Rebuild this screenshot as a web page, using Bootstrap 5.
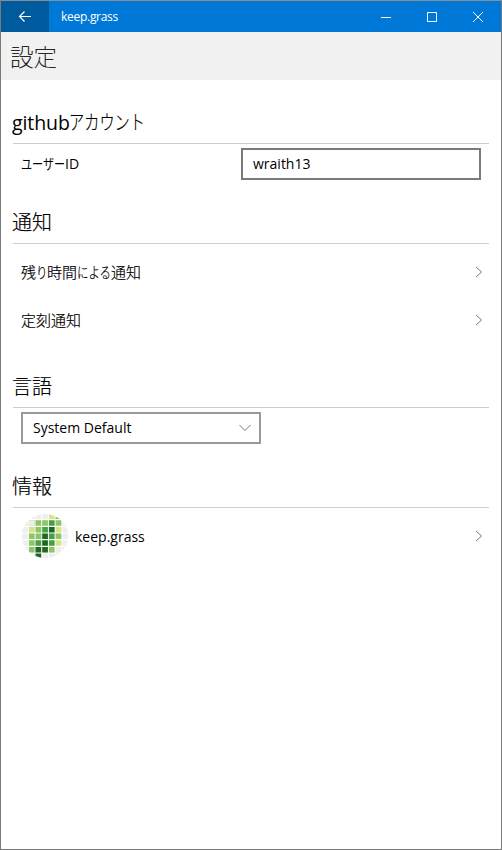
<!DOCTYPE html>
<html lang="ja">
<head>
<meta charset="utf-8">
<meta name="viewport" content="width=device-width, initial-scale=1">
<title>keep.grass</title>
<link href="https://cdn.jsdelivr.net/npm/bootstrap@5.3.0/dist/css/bootstrap.min.css" rel="stylesheet">
<style>
body{font-family:"Open Sans","Noto Sans CJK JP",sans-serif;font-size:14px;line-height:20px;color:#000}
svg{display:block}
.window{height:850px;border:1px solid #7a7a7a;border-top-color:#8a8f94}
.titlebar{height:31px;background:#0078d7}
.back-btn{width:48px;background:#005a9e}
.app-title{font-size:12px;letter-spacing:-.28px;line-height:16px}
.caption-btn{width:46px}
.page-head{height:48px;background:#f1f1f1;font-family:"Noto Sans CJK JP",sans-serif;font-size:23.5px;line-height:48px;font-weight:100;-webkit-text-stroke:.2px #000;padding-left:9px}
.settings{padding:20px 12px 0}
.group-title{font-size:20px;line-height:28px;font-weight:400;height:44px;padding-top:8px;border-bottom:1px solid #ccc}
.group-title>span{margin-left:-1px}
.group-title .latin{font-size:19.5px;letter-spacing:-.1px}
.cjk{font-family:"Noto Sans CJK JP",sans-serif;font-weight:300;-webkit-text-stroke:.2px #000}
.entry{height:48px;padding:0 6px 0 8px}
.entry .cjk{font-size:15px}
.field-row{padding:4px 8px 0}
.kana{display:inline-block;transform-origin:0 50%;white-space:nowrap}
.kana-account{width:74px;transform:scaleX(.76)}
.kana-user{width:44px;transform:scaleX(.79)}
.kana-ri{width:11px;transform:scaleX(.76)}
.kana-niyoru{width:34px;transform:scaleX(.76)}
.field{width:240px;height:32px;border:2px solid #7a7a7a;border-radius:0;padding:0 10px 2px;color:#000}
.field-label{padding-top:6px}
.picker{width:240px;height:32px;border:2px solid #999;padding:0 8px 0 10px;background:#fff;border-radius:0;font-size:14px;line-height:20px;color:#000}
.picker-text{padding-bottom:1px}
.block-user{height:56px}
.block-notify{padding-top:4px;height:120px}
.block-language{height:56px}
.block-info{padding-top:4px}
.product{margin-left:6px;padding-top:1px}
</style>
</head>
<body>
<div class="window d-flex flex-column bg-white overflow-hidden">
<header class="titlebar d-flex text-white flex-shrink-0">
<button class="back-btn btn border-0 rounded-0 p-0 d-flex align-items-center justify-content-center" aria-label="Back"><svg width="14" height="12" fill="none" stroke="#fff" stroke-width="1.2"><path d="M13 5.500H1.500M6.500 .5l-5 5 5 5"/></svg></button>
<span class="app-title align-self-center flex-grow-1 ps-2 ms-1">keep.grass</span>
<span class="caption-btn d-flex align-items-center justify-content-center"><svg width="10" height="10" shape-rendering="crispEdges"><path fill="#fff" d="M0 5h10v1H0z"/></svg></span>
<span class="caption-btn d-flex align-items-center justify-content-center"><svg width="10" height="10" fill="none" stroke="#fff"><path d="M.5.5h9v9h-9z"/></svg></span>
<span class="caption-btn d-flex align-items-center justify-content-center"><svg width="10" height="10" fill="none" stroke="#fff"><path d="M0 0l10 10M10 0L0 10"/></svg></span>
</header>
<h1 class="page-head m-0 flex-shrink-0">設定</h1>
<main class="settings">
<section>
<h2 class="group-title m-0 text-nowrap"><span class="latin">github</span><span class="cjk kana kana-account">アカウント</span></h2>
<div class="block-user field-row d-flex justify-content-between align-items-start">
<label for="uid" class="field-label text-nowrap"><span class="kana kana-user">ユーザー</span>ID</label>
<input id="uid" class="field" value="wraith13">
</div>
</section>
<section>
<h2 class="group-title m-0"><span class="cjk">通知</span></h2>
<div class="block-notify">
<div class="entry d-flex align-items-center justify-content-between"><span class="cjk text-nowrap">残<span class="kana kana-ri">り</span>時間<span class="kana kana-niyoru">による</span>通知</span><svg width="8" height="12" fill="none" stroke="#777"><path d="M1 1l5.500 5L1 11"/></svg></div>
<div class="entry d-flex align-items-center justify-content-between"><span class="cjk">定刻通知</span><svg width="8" height="12" fill="none" stroke="#777"><path d="M1 1l5.500 5L1 11"/></svg></div>
</div>
</section>
<section>
<h2 class="group-title m-0"><span class="cjk">言語</span></h2>
<div class="block-language field-row">
<button class="picker btn d-flex align-items-center justify-content-between"><span class="picker-text">System Default</span><svg width="12" height="8" fill="none" stroke="#777"><path d="M.5 1L6 6.500 11.500 1"/></svg></button>
</div>
</section>
<section>
<h2 class="group-title m-0"><span class="cjk">情報</span></h2>
<div class="block-info">
<div class="entry d-flex align-items-center">
<svg width="48" height="48" viewBox="21 512 48 48" class="flex-shrink-0">
<defs><clipPath id="disc"><ellipse cx="45" cy="536" rx="23.300" ry="22"/></clipPath></defs>
<g clip-path="url(#disc)" fill="none" stroke-width="5.500" stroke-dasharray="5.700 1">
<path stroke="#eee" d="M22.200 516.300H69M22.200 523H69M22.200 529.700H69M22.200 536.300H69M22.200 543H69M22.200 549.700H69M22.200 556.300H69"/>
<path stroke="#d6e685" d="M48.900 516.300h5.700M28.900 529.700h5.700M55.600 529.700h5.700M55.600 543h5.700"/>
<path stroke="#8cc665" d="M55.600 516.300h5.700M35.500 523h12.400M28.900 523h5.700M55.600 523h5.700M35.500 529.700h5.700M28.900 536.300h12.400M55.600 536.300h5.700M28.900 543h5.700M28.900 549.700h5.700M48.900 549.700h5.700"/>
<path stroke="#44a340" d="M48.900 523h5.700M42.200 529.700h5.700M48.900 536.300h5.700M35.500 543h5.700M48.900 543h5.700"/>
<path stroke="#1e6823" d="M48.900 529.700h5.700M42.200 536.300h5.700M42.200 543h5.700M35.500 549.700h12.400M35.500 556.300h5.700"/>
<path stroke="#eee" d="M28.900 523h5.700"/>
</g>
</svg>
<span class="product flex-grow-1">keep.grass</span>
<svg width="8" height="12" fill="none" stroke="#777"><path d="M1 1l5.500 5L1 11"/></svg>
</div>
</div>
</section>
</main>
</div>
</body>
</html>
